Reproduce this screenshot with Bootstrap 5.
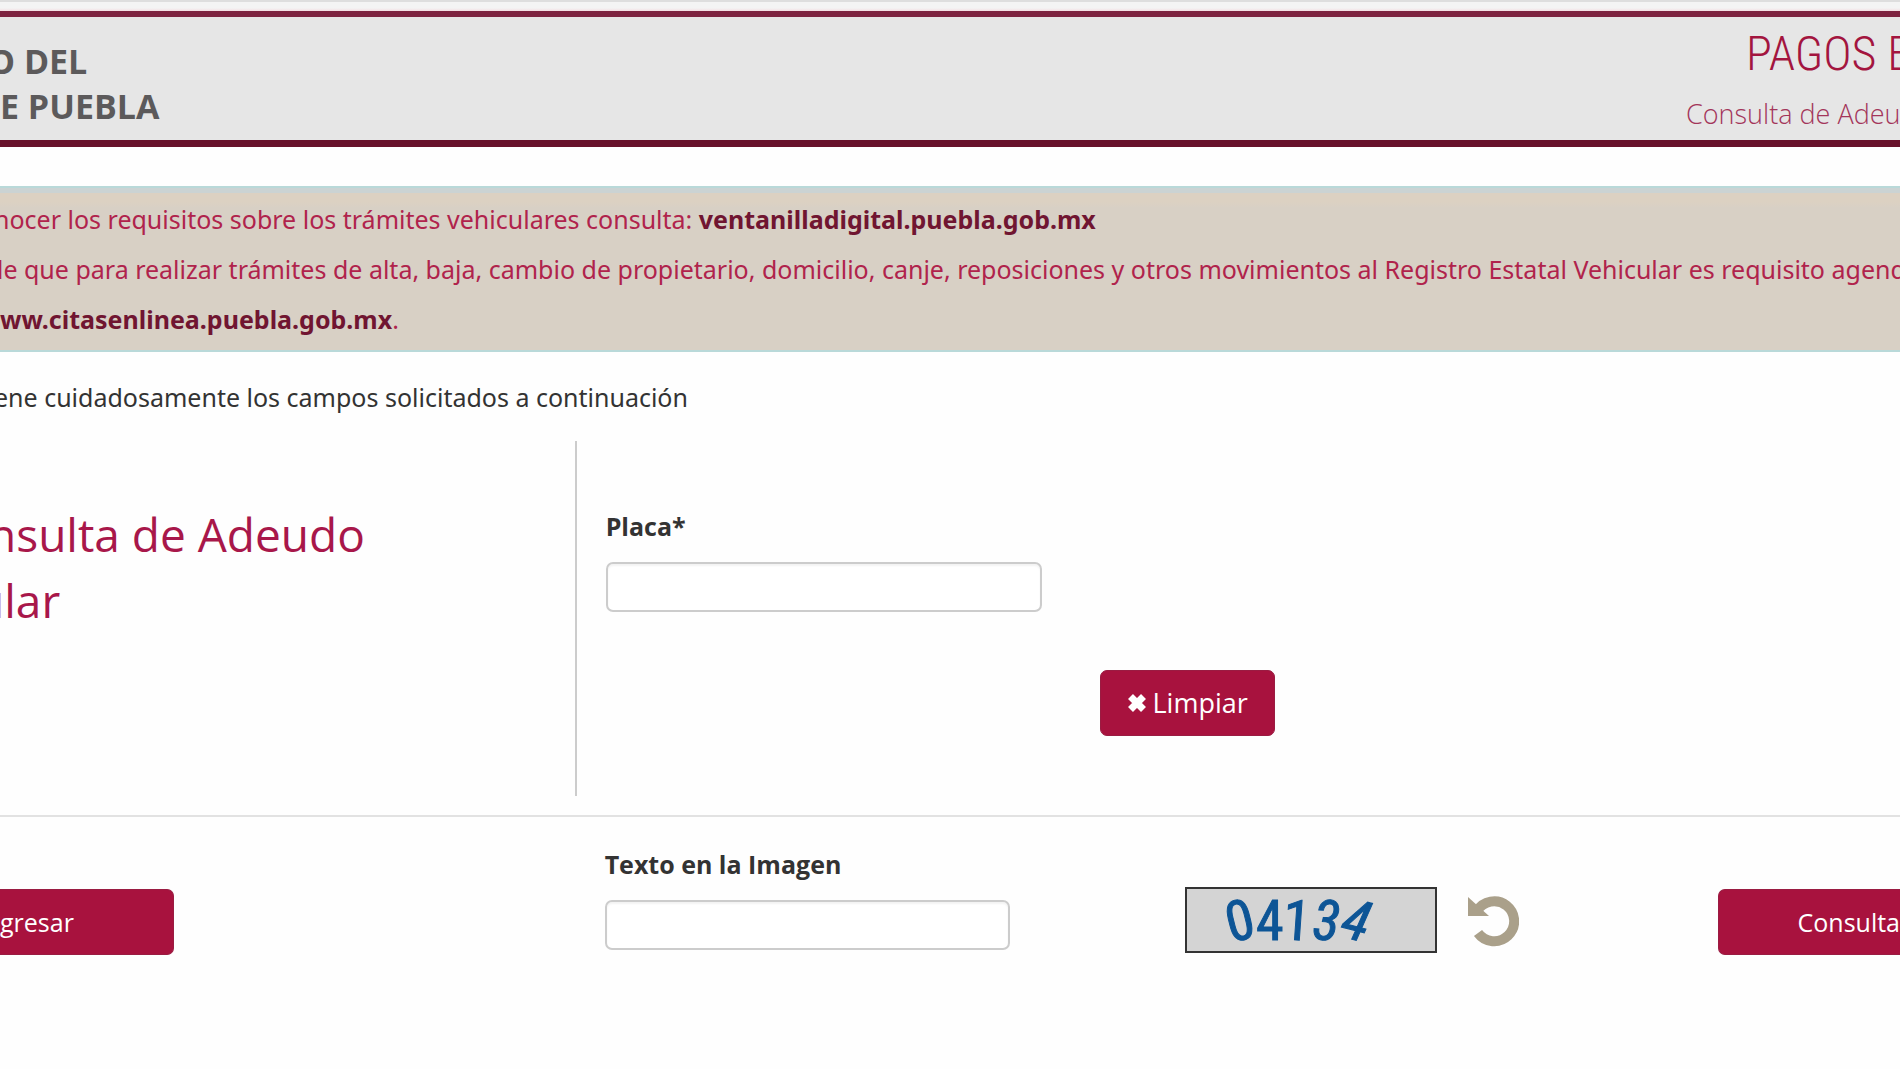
<!DOCTYPE html>
<html lang="es">
<head>
<meta charset="utf-8">
<meta name="viewport" content="width=device-width, initial-scale=1">
<title>Consulta de Adeudo Vehicular</title>
<link rel="stylesheet" href="https://cdn.jsdelivr.net/npm/bootstrap@5.3.0/dist/css/bootstrap.min.css">
<style>
  :root { --wine: #a8123e; --bleed-s: -6px; --bleed-l: -12px; }
  body { font-family: "Open Sans", "Noto Sans", sans-serif; font-size: 25px; line-height: 36px; color: #333; background: #fefefe; overflow-x: hidden; }
  .topline { height: 11px; background: linear-gradient(#dedede 0 2px, #f4f4f4 2px 8px, #f3dfe3 11px); }
  .masthead { background: #e6e6e6; border-top: 6px solid #7d2340; border-bottom: 7px solid #68122b; }
  .gov-name { font-size: 34px; line-height: 45px; font-weight: 700; color: #5c5a5b; padding-top: 22px; padding-bottom: 11px; }
  .site-title { font-family: "Roboto Condensed", "Open Sans", sans-serif; font-weight: 300; font-size: 48px; line-height: 56px; color: #a3153f; padding-left: 60px; }
  .site-sub { font-weight: 300; font-size: 27px; line-height: 40px; color: #a3355a; margin-top: 12px; }
  .site-id { width: 214px; padding-top: 9px; }
  .bleed-s { margin-left: var(--bleed-s); }
  .bleed-l { margin-left: var(--bleed-l); }
  .notice, .hint { font-family: "Noto Sans", "Open Sans", sans-serif; }
  .notice { margin-top: 39px; padding: 6px 0; line-height: 50px; color: #b0234c; border: solid #b9d9d9; border-width: 2px 0; background: linear-gradient(#cbd3d3 0 5px, #dcd1c2 5px 14px, #d8d0c5 20px); }
  .notice a { color: #701531; font-weight: 700; text-decoration: none; }
  .hint { margin-top: 27px; }
  .panel-row { margin-top: 26px; height: 355px; }
  .side { width: 30.35%; }
  .panel-row .side { border-right: 2px solid #ccc; padding-top: 60px; }
  .side h1 { font-size: 46px; line-height: 66px; font-weight: 400; color: #a8174a; }
  .fields { padding-left: 29px; padding-top: 67px; }
  .captcha-fields { padding-left: 28px; }
  .field-label { font-weight: 700; margin-bottom: 18px; display: block; }
  .entry { height: 50px; border: 2px solid #ccc; border-radius: 7px; font-size: 25px; padding: 4px 14px; box-shadow: inset 0 2px 2px rgba(0,0,0,.05); }
  .entry-plate { width: 436px; }
  .entry-code { width: 405px; }
  .btn-wine { --bs-btn-color: #fff; --bs-btn-bg: var(--wine); --bs-btn-border-color: #9a1c42; --bs-btn-hover-color: #fff; --bs-btn-hover-bg: #8c0f34; --bs-btn-hover-border-color: #8c0f34; --bs-btn-active-bg: #7c0d2e; --bs-btn-border-radius: 7px; --bs-btn-font-size: 25px; --bs-btn-line-height: 36px; height: 66px; }
  .btn-clear { --bs-btn-font-size: 27px; gap: 6px; width: 175px; margin: 58px 0 0 494px; }
  .divider { margin: 19px 0 0; border-top: 2px solid #e2e2e2; opacity: 1; }
  .actions { padding-top: 29px; }
  .btn-back { width: 174px; text-align: left; border-top-left-radius: 0; border-bottom-left-radius: 0; margin-top: 43px; --bs-btn-padding-x: 0; border-left: 0; }
  .btn-go { width: 182px; text-align: right; border-top-right-radius: 0; border-bottom-right-radius: 0; margin-top: 43px; --bs-btn-padding-x: 0; border-right: 0; }
  .captcha { width: 252px; height: 66px; border: 2px solid #333; background: #d4d4d4; }
  .captcha-box { margin: 41px 0 0 175px; gap: 30px; }
  .captcha text { font-family: "Roboto Condensed", "Liberation Sans", sans-serif; font-size: 56px; fill: #0d5596; stroke: #0d5596; stroke-width: 1; }
</style>
</head>
<body>
<div class="topline"></div>
<header class="masthead d-flex justify-content-between">
  <div class="gov-name">
    <div class="bleed-l">O DEL</div>
    <div>E PUEBLA</div>
  </div>
  <div class="site-id text-nowrap overflow-hidden">
    <div class="site-title">PAGOS E</div>
    <div class="site-sub">Consulta de Adeu</div>
  </div>
</header>

<main>
  <div class="notice text-nowrap overflow-hidden">
    <div class="bleed-s">nocer los requisitos sobre los trámites vehiculares consulta: <a href="#">ventanilladigital.puebla.gob.mx</a></div>
    <div class="bleed-l">de que para realizar trámites de alta, baja, cambio de propietario, domicilio, canje, reposiciones y otros movimientos al Registro Estatal Vehicular es requisito agend</div>
    <div><a href="#">ww.citasenlinea.puebla.gob.mx</a>.</div>
  </div>

  <p class="hint bleed-s mb-0">ene cuidadosamente los campos solicitados a continuación</p>

  <form>
    <div class="panel-row d-flex">
      <div class="side flex-shrink-0">
        <h1 class="bleed-l mb-0">nsulta de Adeudo<br><span class="bleed-l">ular</span></h1>
      </div>
      <div class="fields flex-grow-1">
        <label class="field-label" for="placa">Placa*</label>
        <input class="form-control entry entry-plate" id="placa" type="text">
        <button class="btn btn-wine btn-clear d-flex align-items-center justify-content-center" type="reset">
          <svg width="20" height="20" viewBox="0 0 20 20" aria-hidden="true"><path d="M3.500 3.500 16.500 16.500M16.500 3.500 3.500 16.500" stroke="#fff" stroke-width="7" fill="none"/></svg>
          Limpiar
        </button>
      </div>
    </div>

    <hr class="divider">

    <div class="actions d-flex overflow-hidden">
      <div class="side flex-shrink-0">
        <button class="btn btn-wine btn-back" type="button">gresar</button>
      </div>
      <div class="captcha-fields">
        <label class="field-label" for="codigo">Texto en la Imagen</label>
        <input class="form-control entry entry-code" id="codigo" type="text">
      </div>
      <div class="captcha-box d-flex align-items-center align-self-start">
        <svg class="captcha" viewBox="0 0 248 62" role="img" aria-label="04134">
          <text x="39" y="51" transform="rotate(-14 53 32)">0</text>
          <text x="69" y="51">4</text>
          <text x="96" y="51" transform="rotate(4 108 32)">1</text>
          <text x="126" y="51" transform="rotate(4 140 32)" font-style="italic">3</text>
          <text x="156" y="51" transform="rotate(14 170 32)" font-style="italic">4</text>
        </svg>
        <button class="btn p-0 border-0 d-flex" type="button" aria-label="Cambiar imagen">
          <svg width="52" height="54" viewBox="0 0 52 54"><path d="M10 18A20 20 0 1 1 11 40" fill="none" stroke="#aaa08a" stroke-width="10"/><path d="M1 4V23H22Z" fill="#aaa08a"/></svg>
        </button>
      </div>
      <button class="btn btn-wine btn-go ms-auto" type="submit">Consulta</button>
    </div>
  </form>
</main>
<script src="https://cdn.jsdelivr.net/npm/bootstrap@5.3.0/dist/js/bootstrap.bundle.min.js"></script>
</body>
</html>
